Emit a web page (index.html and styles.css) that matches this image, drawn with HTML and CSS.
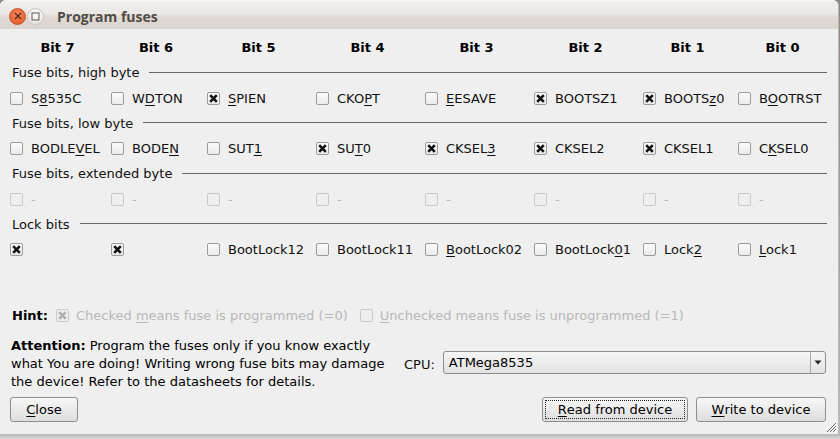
FILE: index.html
```html
<!DOCTYPE html>
<html>
<head>
<meta charset="utf-8">
<title>Program fuses</title>
<link rel="stylesheet" href="styles.css">
</head>
<body>
<div class="window">
  <div class="titlebar">
    <span class="wbtn close"><svg width="8" height="8" viewBox="0 0 8 8"><path d="M1 1L7 7M7 1L1 7" stroke="#4a2a1e" stroke-width="1.2"/></svg></span>
    <span class="wbtn max"><svg width="9" height="9" viewBox="0 0 9 9"><rect x="1" y="1" width="7" height="7" fill="none" stroke="#5a5a5a" stroke-width="1"/></svg></span>
    <span class="title">Program fuses</span>
  </div>
  <div class="content">
    <div class="grid">
      <div class="hdr">Bit 7</div>
      <div class="hdr">Bit 6</div>
      <div class="hdr">Bit 5</div>
      <div class="hdr">Bit 4</div>
      <div class="hdr">Bit 3</div>
      <div class="hdr">Bit 2</div>
      <div class="hdr">Bit 1</div>
      <div class="hdr">Bit 0</div>

      <div class="group"><span>Fuse bits, high byte</span><i class="rule"></i></div>
      <div class="cb"><span class="box"></span><span>S<u>8</u>535C</span></div>
      <div class="cb"><span class="box"></span><span>W<u>D</u>TON</span></div>
      <div class="cb"><span class="box on"><svg viewBox="0 0 11 11"><path d="M2.2 2.2L8.8 8.8M8.8 2.2L2.2 8.8"/></svg></span><span><u>S</u>PIEN</span></div>
      <div class="cb"><span class="box"></span><span>CKO<u>P</u>T</span></div>
      <div class="cb"><span class="box"></span><span><u>E</u>ESAVE</span></div>
      <div class="cb"><span class="box on"><svg viewBox="0 0 11 11"><path d="M2.2 2.2L8.8 8.8M8.8 2.2L2.2 8.8"/></svg></span><span>BOOTSZ1</span></div>
      <div class="cb"><span class="box on"><svg viewBox="0 0 11 11"><path d="M2.2 2.2L8.8 8.8M8.8 2.2L2.2 8.8"/></svg></span><span>BOOTS<u>z</u>0</span></div>
      <div class="cb"><span class="box"></span><span>B<u>O</u>OTRST</span></div>

      <div class="group"><span>Fuse bits, low byte</span><i class="rule"></i></div>
      <div class="cb"><span class="box"></span><span>BODLE<u>V</u>EL</span></div>
      <div class="cb"><span class="box"></span><span>BODE<u>N</u></span></div>
      <div class="cb"><span class="box"></span><span>SUT<u>1</u></span></div>
      <div class="cb"><span class="box on"><svg viewBox="0 0 11 11"><path d="M2.2 2.2L8.8 8.8M8.8 2.2L2.2 8.8"/></svg></span><span>SU<u>T</u>0</span></div>
      <div class="cb"><span class="box on"><svg viewBox="0 0 11 11"><path d="M2.2 2.2L8.8 8.8M8.8 2.2L2.2 8.8"/></svg></span><span>CKSEL<u>3</u></span></div>
      <div class="cb"><span class="box on"><svg viewBox="0 0 11 11"><path d="M2.2 2.2L8.8 8.8M8.8 2.2L2.2 8.8"/></svg></span><span>CKSEL2</span></div>
      <div class="cb"><span class="box on"><svg viewBox="0 0 11 11"><path d="M2.2 2.2L8.8 8.8M8.8 2.2L2.2 8.8"/></svg></span><span>CKSEL1</span></div>
      <div class="cb"><span class="box"></span><span>C<u>K</u>SEL0</span></div>

      <div class="group"><span>Fuse bits, extended byte</span><i class="rule"></i></div>
      <div class="cb dis"><span class="box"></span><span>-</span></div>
      <div class="cb dis"><span class="box"></span><span>-</span></div>
      <div class="cb dis"><span class="box"></span><span>-</span></div>
      <div class="cb dis"><span class="box"></span><span>-</span></div>
      <div class="cb dis"><span class="box"></span><span>-</span></div>
      <div class="cb dis"><span class="box"></span><span>-</span></div>
      <div class="cb dis"><span class="box"></span><span>-</span></div>
      <div class="cb dis"><span class="box"></span><span>-</span></div>

      <div class="group"><span>Lock bits</span><i class="rule"></i></div>
      <div class="cb"><span class="box on"><svg viewBox="0 0 11 11"><path d="M2.2 2.2L8.8 8.8M8.8 2.2L2.2 8.8"/></svg></span></div>
      <div class="cb"><span class="box on"><svg viewBox="0 0 11 11"><path d="M2.2 2.2L8.8 8.8M8.8 2.2L2.2 8.8"/></svg></span></div>
      <div class="cb"><span class="box"></span><span>BootLock12</span></div>
      <div class="cb"><span class="box"></span><span>BootLock11</span></div>
      <div class="cb"><span class="box"></span><span><u>B</u>ootLock02</span></div>
      <div class="cb"><span class="box"></span><span>BootLock<u>0</u>1</span></div>
      <div class="cb"><span class="box"></span><span>Lock<u>2</u></span></div>
      <div class="cb"><span class="box"></span><span><u>L</u>ock1</span></div>
    </div>

    <div class="hint">
      <b>Hint:</b>
      <span class="cb dis"><span class="box on"><svg viewBox="0 0 11 11"><path d="M2.2 2.2L8.8 8.8M8.8 2.2L2.2 8.8"/></svg></span><span>Checked <u>m</u>eans fuse is programmed (=0)</span></span>
      <span class="cb dis"><span class="box"></span><span><u>U</u>nchecked means fuse is unprogrammed (=1)</span></span>
    </div>

    <div class="bottom">
      <p class="attn"><b>Attention:</b> Program the fuses only if you know exactly<br>what You are doing! Writing wrong fuse bits may damage<br>the device! Refer to the datasheets for details.</p>
      <div class="cpu">
        <span class="cpu-label">CPU:</span>
        <div class="combo"><span class="combo-text">ATMega8535</span><span class="combo-arrow"><svg width="8" height="5" viewBox="0 0 8 5"><path d="M0.5 0.5H7.5L4 4.5Z" fill="#222"/></svg></span></div>
      </div>
    </div>

    <div class="buttons">
      <button class="btn btn-close"><u>C</u>lose</button>
      <span class="spacer"></span>
      <button class="btn btn-read"><span class="focus"><u>R</u>ead from device</span></button>
      <button class="btn btn-write"><u>W</u>rite to device</button>
    </div>
  </div>
  <svg class="grip" width="11" height="11" viewBox="0 0 11 11"><path d="M10 1L1 10M10 4L4 10M10 7L7 10" stroke="#6e6e6e" stroke-width="1"/><path d="M11 2L2 11M11 5L5 11M11 8L8 11" stroke="#ffffff" stroke-width="1"/></svg>
</div>
</body>
</html>
```

FILE: styles.css
```css
* { box-sizing: border-box; }
html, body { margin: 0; padding: 0; }
body {
  width: 840px;
  height: 439px;
  overflow: hidden;
  background: linear-gradient(#8d8884 0, #b9b6b3 434px, #d8d8d8 439px);
  font-family: "DejaVu Sans", sans-serif;
  font-size: 13px;
  color: #101010;
}
.window {
  position: relative;
  width: 839px;
  height: 434px;
  background: #efefef;
  border-radius: 6px 6px 0 0;
  border-right: 1px solid #bdb8b3;
  display: flex;
  flex-direction: column;
}
.titlebar {
  height: 29px;
  flex: none;
  display: flex;
  align-items: center;
  padding-left: 9px;
  border-radius: 6px 6px 0 0;
  background: linear-gradient(#f0efed 0, #ebe8e5 45%, #e0d9d3 60%, #dcd5cf 100%);
  border-top: 1px solid #f7f6f5;
}
.wbtn {
  width: 17px;
  height: 17px;
  border-radius: 50%;
  display: flex;
  align-items: center;
  justify-content: center;
  margin-top: 2px;
}
.wbtn.close {
  background: radial-gradient(circle at 50% 35%, #f6875a 0, #ec6a3c 55%, #d9542a 100%);
  border: 1px solid #c4552f;
}
.wbtn.max {
  margin-left: 1px;
  background: radial-gradient(circle at 50% 35%, #fbfaf9 0, #efedeb 60%, #dcd8d4 100%);
  border: 1px solid #c8c4c0;
}
.title {
  margin-left: 13px;
  margin-top: 2px;
  font-family: "Open Sans", "DejaVu Sans", sans-serif;
  font-weight: bold;
  font-size: 14px;
  color: #4f4c48;
}
.content {
  flex: 1;
  display: flex;
  flex-direction: column;
  padding: 9px 12px 0 10px;
}
.grid {
  display: grid;
  grid-template-columns: 95px 90px 103px 103px 103px 103px 89px 89px;
  grid-auto-rows: 19.25px;
  column-gap: 6px;
  row-gap: 6px;
  align-items: center;
}
.hdr {
  font-weight: bold;
  text-align: center;
  color: #000;
}
.group {
  grid-column: 1 / -1;
  display: flex;
  align-items: center;
  padding-left: 2px;
  color: #111;
}
.rule {
  flex: 1;
  height: 1px;
  background: #666;
  margin-left: 10px;
  margin-top: -1px;
}
.cb {
  display: flex;
  align-items: center;
  white-space: nowrap;
}
.box {
  width: 13px;
  height: 13px;
  flex: none;
  margin-right: 8px;
  border: 1px solid #9b9b9b;
  border-radius: 2px;
  background: linear-gradient(#fbfbfb, #ebebeb);
  display: flex;
  align-items: center;
  justify-content: center;
}
.box svg {
  width: 11px;
  height: 11px;
  stroke: #111;
  stroke-width: 2.6;
  fill: none;
}
.dis { color: #b8b8b8; }
.dis .box {
  border-color: #c9c9c9;
  background: #efefef;
}
.dis .box svg { stroke: #b0b0b0; }
u { text-underline-offset: 2px; }

.hint {
  margin-top: 47px;
  height: 19px;
  display: flex;
  align-items: center;
  padding-left: 2px;
}
.hint b { margin-right: 8px; color: #000; }
.hint .box { margin-right: 7px; }
.hint .cb + .cb { margin-left: 12px; }

.bottom {
  margin-top: 12px;
  display: flex;
  align-items: center;
  padding-left: 1px;
}
.attn {
  margin: 0;
  line-height: 18px;
  width: 393px;
  color: #000;
}
.cpu {
  flex: 1;
  display: flex;
  align-items: center;
}
.cpu-label { margin-right: 8px; }
.combo {
  flex: 1;
  height: 23px;
  border: 1px solid #8e8e8e;
  border-radius: 3px;
  background: linear-gradient(#f6f6f6, #e2e2e2);
  display: flex;
  align-items: center;
  margin-top: -3px;
}
.combo-text { flex: 1; padding-left: 5px; color: #000; }
.combo-arrow {
  width: 15px;
  height: 100%;
  border-left: 1px solid #a8a8a8;
  display: flex;
  align-items: center;
  justify-content: center;
}
.buttons {
  margin-top: 6px;
  display: flex;
  align-items: center;
}
.spacer { flex: 1; }
.btn {
  height: 25px;
  font-family: "DejaVu Sans", sans-serif;
  font-size: 13px;
  color: #000;
  border: 1px solid #8e8e8e;
  border-radius: 3px;
  background: linear-gradient(#f7f7f7, #dedede);
  padding: 0;
  display: flex;
  align-items: center;
  justify-content: center;
}
.btn-close { width: 68px; }
.btn-read { width: 146px; padding: 2px; }
.btn-read .focus {
  width: 100%;
  height: 100%;
  border: 1px dotted #222;
  display: flex;
  align-items: center;
  justify-content: center;
}
.btn-write { width: 130px; margin-left: 8px; }
.grip {
  position: absolute;
  right: 1px;
  bottom: 1px;
}
```
